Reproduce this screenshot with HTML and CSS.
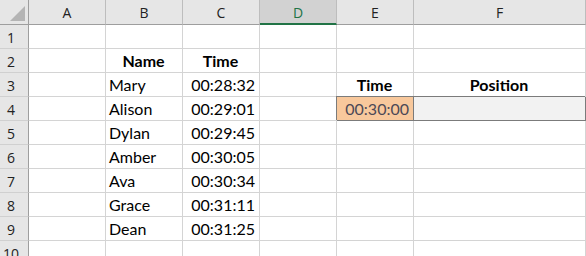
FILE: index.html
```html
<!DOCTYPE html>
<html lang="en">

<head>
    <meta charset="UTF-8">
    <meta name="viewport" content="width=device-width, initial-scale=1.0">
    <title>Race Times</title>
    <link rel="stylesheet" href="styles.css">
</head>

<body>
    <main class="sheet">
        <!-- column headers -->
        <div class="hd corner"><span class="corner-tri"></span></div>
        <div class="hd col">A</div>
        <div class="hd col">B</div>
        <div class="hd col">C</div>
        <div class="hd col active">D</div>
        <div class="hd col">E</div>
        <div class="hd col">F</div>

        <!-- row 1 -->
        <div class="hd row">1</div>
        <div class="cell"></div><div class="cell"></div><div class="cell"></div>
        <div class="cell"></div><div class="cell"></div><div class="cell"></div>

        <!-- row 2 -->
        <div class="hd row">2</div>
        <div class="cell"></div>
        <div class="cell bold center">Name</div>
        <div class="cell bold center">Time</div>
        <div class="cell"></div><div class="cell"></div><div class="cell"></div>

        <!-- row 3 -->
        <div class="hd row">3</div>
        <div class="cell"></div>
        <div class="cell">Mary</div>
        <div class="cell num">00:28:32</div>
        <div class="cell"></div>
        <div class="cell bold center">Time</div>
        <div class="cell bold center">Position</div>

        <!-- row 4 -->
        <div class="hd row">4</div>
        <div class="cell"></div>
        <div class="cell">Alison</div>
        <div class="cell num">00:29:01</div>
        <div class="cell"></div>
        <div class="cell num input-time">00:30:00</div>
        <div class="cell output"></div>

        <!-- row 5 -->
        <div class="hd row">5</div>
        <div class="cell"></div>
        <div class="cell">Dylan</div>
        <div class="cell num">00:29:45</div>
        <div class="cell"></div><div class="cell"></div><div class="cell"></div>

        <!-- row 6 -->
        <div class="hd row">6</div>
        <div class="cell"></div>
        <div class="cell">Amber</div>
        <div class="cell num">00:30:05</div>
        <div class="cell"></div><div class="cell"></div><div class="cell"></div>

        <!-- row 7 -->
        <div class="hd row">7</div>
        <div class="cell"></div>
        <div class="cell">Ava</div>
        <div class="cell num">00:30:34</div>
        <div class="cell"></div><div class="cell"></div><div class="cell"></div>

        <!-- row 8 -->
        <div class="hd row">8</div>
        <div class="cell"></div>
        <div class="cell">Grace</div>
        <div class="cell num">00:31:11</div>
        <div class="cell"></div><div class="cell"></div><div class="cell"></div>

        <!-- row 9 -->
        <div class="hd row">9</div>
        <div class="cell"></div>
        <div class="cell">Dean</div>
        <div class="cell num">00:31:25</div>
        <div class="cell"></div><div class="cell"></div><div class="cell"></div>

        <!-- row 10 -->
        <div class="hd row">10</div>
        <div class="cell"></div><div class="cell"></div><div class="cell"></div>
        <div class="cell"></div><div class="cell"></div><div class="cell"></div>
    </main>
</body>

</html>
```

FILE: styles.css
```css
* {
    margin: 0;
    padding: 0;
    box-sizing: border-box;
}

body {
    background: #fff;
    overflow: hidden;
}

.sheet {
    display: grid;
    grid-template-columns: 29px 77px 77px 77px 77px 77px 172px;
    grid-template-rows: 25px repeat(10, 24px);
    width: 586px;
}

/* headers */
.hd {
    background: #e6e6e6;
    border-right: 1px solid #bdbdbd;
    border-bottom: 1px solid #bdbdbd;
    font-family: "Open Sans", sans-serif;
    font-size: 14px;
    color: #222;
    display: flex;
    align-items: center;
    justify-content: center;
}

.col {
    border-bottom: 1px solid #9e9e9e;
    padding-top: 1px;
}

.col.active {
    background: #d2d2d2;
    color: #217346;
    border-bottom: 2px solid #217346;
    padding-top: 2px;
}

.corner {
    position: relative;
    border-right: 1px solid #9e9e9e;
    border-bottom: 1px solid #9e9e9e;
}

.corner-tri {
    position: absolute;
    right: 3px;
    bottom: 3px;
    width: 0;
    height: 0;
    border-left: 15px solid transparent;
    border-bottom: 15px solid #b4b4b4;
}

.row {
    border-right: 1px solid #9e9e9e;
    border-bottom: 1px solid #d0d0d0;
    padding-right: 6px;
    padding-top: 2px;
}

/* cells */
.cell {
    border-right: 1px solid #d4d4d4;
    border-bottom: 1px solid #d4d4d4;
    font-family: Lato, sans-serif;
    font-size: 16px;
    line-height: 1;
    color: #000;
    display: flex;
    align-items: flex-end;
    padding: 0 4px 3px 3px;
    white-space: nowrap;
}

.bold {
    font-weight: bold;
}

.center {
    justify-content: center;
}

.num {
    justify-content: flex-end;
}

.input-time {
    background: #f8c89c;
    color: #4c4856;
    box-shadow: -1px -1px 0 0 #7b7b7b;
    border-right-color: #7b7b7b;
    border-bottom-color: #7b7b7b;
}

.output {
    background: #f2f2f2;
    box-shadow: -1px -1px 0 0 #7b7b7b;
    border-right-color: #7b7b7b;
    border-bottom-color: #7b7b7b;
}
```
